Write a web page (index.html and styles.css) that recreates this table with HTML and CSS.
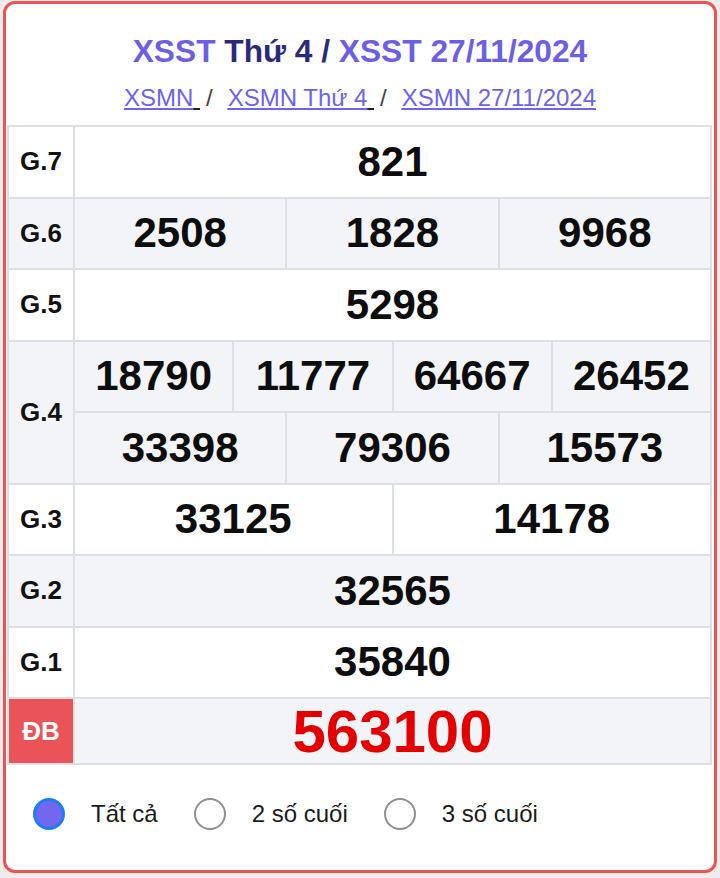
FILE: index.html
```html
<!DOCTYPE html>
<html lang="vi">
<head>
<meta charset="utf-8">
<title>XSST Thứ 4</title>
<link rel="stylesheet" href="styles.css">
</head>
<body>
<div class="card">
  <div class="head">
    <h2 class="title"><a href="#" class="lnk">XSST</a> <a href="#" class="day">Thứ 4</a><span class="day"> / </span><a href="#" class="lnk">XSST 27/11/2024</a></h2>
    <div class="crumbs"><a href="#" class="crumb"><span>XSMN</span> </a><span class="sep">/</span><a href="#" class="crumb"><span>XSMN Thứ 4</span> </a><span class="sep">/</span><a href="#" class="crumb"><span>XSMN 27/11/2024</span></a></div>
  </div>

  <div class="tbl">
    <div class="c lab">G.7</div>
    <div class="c num s12">821</div>

    <div class="c lab alt">G.6</div>
    <div class="c num s4 alt">2508</div>
    <div class="c num s4 alt">1828</div>
    <div class="c num s4 alt">9968</div>

    <div class="c lab">G.5</div>
    <div class="c num s12">5298</div>

    <div class="c lab alt r2">G.4</div>
    <div class="c num s3 alt">18790</div>
    <div class="c num s3 alt">11777</div>
    <div class="c num s3 alt">64667</div>
    <div class="c num s3 alt">26452</div>
    <div class="c num s4 alt">33398</div>
    <div class="c num s4 alt">79306</div>
    <div class="c num s4 alt">15573</div>

    <div class="c lab">G.3</div>
    <div class="c num s6">33125</div>
    <div class="c num s6">14178</div>

    <div class="c lab alt">G.2</div>
    <div class="c num s12 alt">32565</div>

    <div class="c lab">G.1</div>
    <div class="c num s12">35840</div>

    <div class="c lab db">ĐB</div>
    <div class="c num s12 alt special">563100</div>
  </div>

  <div class="opts">
    <label class="opt"><input type="radio" name="show" checked><span>Tất cả</span></label>
    <label class="opt"><input type="radio" name="show"><span>2 số cuối</span></label>
    <label class="opt"><input type="radio" name="show"><span>3 số cuối</span></label>
  </div>
</div>
</body>
</html>
```

FILE: styles.css
```css
html {
  background: #efedea;
}
body {
  margin: 0;
  padding: 1px 3px 0 3px;
  font-family: "Liberation Sans", Arial, sans-serif;
  color: #111;
}
.card {
  background: #fff;
  border: 3px solid #ea5456;
  border-radius: 12px;
  padding: 27px 0 40px 0;
}
.head {
  text-align: center;
}
.title {
  margin: 0 0 12px 0;
  font-size: 31.7px;
  line-height: 40px;
  font-weight: bold;
}
.title a {
  text-decoration: none;
}
.title .lnk {
  color: #6c5fe6;
}
.title .day {
  color: #2b2a7a;
}
.crumbs {
  margin: 0 0 12px 0;
  font-size: 24px;
  line-height: 30px;
  color: #333;
}
.crumb {
  color: #222;
  text-decoration: underline;
  text-decoration-color: #222;
}
.crumb span {
  color: #6c63ee;
  text-decoration: underline;
  text-decoration-color: #6c63ee;
}
.sep {
  margin: 0 15px 0 6px;
  color: #444;
}
.tbl {
  display: grid;
  grid-template-columns: 66px repeat(12, 1fr);
  grid-template-rows: repeat(8, 71.5px) 66px;
  border-top: 2px solid #dcdfe4;
  border-left: 2px solid #dcdfe4;
  margin: 0 2px 0 1px;
}
.c {
  display: flex;
  align-items: center;
  justify-content: center;
  border-right: 2px solid #dcdfe4;
  border-bottom: 2px solid #dcdfe4;
  background: #fff;
}
.alt {
  background: #f3f4f7;
}
.lab {
  font-size: 26px;
  font-weight: bold;
  color: #111;
}
.num {
  font-size: 42px;
  font-weight: bold;
  color: #0d0d0d;
}
.s12 { grid-column: span 12; }
.s6 { grid-column: span 6; }
.s4 { grid-column: span 4; }
.s3 { grid-column: span 3; }
.r2 { grid-row: span 2; }
.db {
  background: #ea5459;
  color: #fff;
}
.special {
  font-size: 60px;
  color: #e50000;
}
.opts {
  display: flex;
  align-items: center;
  gap: 36px;
  padding: 33px 0 0 27px;
}
.opt {
  display: flex;
  align-items: center;
  gap: 26px;
  font-size: 24px;
  line-height: 32px;
  color: #1a1a1a;
}
.opt input {
  appearance: none;
  -webkit-appearance: none;
  margin: 0;
  width: 32px;
  height: 32px;
  border-radius: 50%;
  border: 2.5px solid #8e8e93;
  background: #fff;
  box-sizing: border-box;
}
.opt input:checked {
  border: 3px solid #1a7ff6;
  background: #7367ef;
}
```
